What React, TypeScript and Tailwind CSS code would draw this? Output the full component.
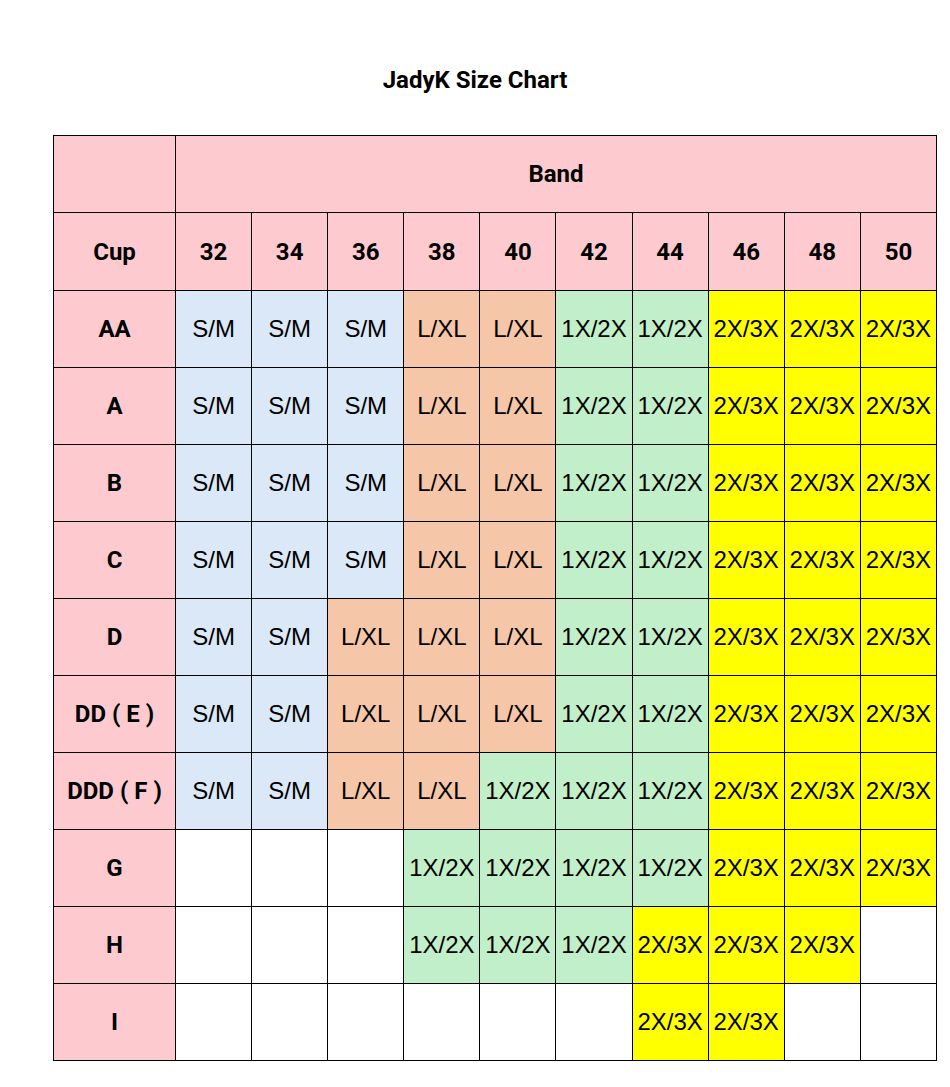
const BANDS = ["32", "34", "36", "38", "40", "42", "44", "46", "48", "50"];

type Size = "S/M" | "L/XL" | "1X/2X" | "2X/3X" | "";

const ROWS: { cup: string; sizes: Size[] }[] = [
  { cup: "AA", sizes: ["S/M", "S/M", "S/M", "L/XL", "L/XL", "1X/2X", "1X/2X", "2X/3X", "2X/3X", "2X/3X"] },
  { cup: "A", sizes: ["S/M", "S/M", "S/M", "L/XL", "L/XL", "1X/2X", "1X/2X", "2X/3X", "2X/3X", "2X/3X"] },
  { cup: "B", sizes: ["S/M", "S/M", "S/M", "L/XL", "L/XL", "1X/2X", "1X/2X", "2X/3X", "2X/3X", "2X/3X"] },
  { cup: "C", sizes: ["S/M", "S/M", "S/M", "L/XL", "L/XL", "1X/2X", "1X/2X", "2X/3X", "2X/3X", "2X/3X"] },
  { cup: "D", sizes: ["S/M", "S/M", "L/XL", "L/XL", "L/XL", "1X/2X", "1X/2X", "2X/3X", "2X/3X", "2X/3X"] },
  { cup: "DD ( E )", sizes: ["S/M", "S/M", "L/XL", "L/XL", "L/XL", "1X/2X", "1X/2X", "2X/3X", "2X/3X", "2X/3X"] },
  { cup: "DDD ( F )", sizes: ["S/M", "S/M", "L/XL", "L/XL", "1X/2X", "1X/2X", "1X/2X", "2X/3X", "2X/3X", "2X/3X"] },
  { cup: "G", sizes: ["", "", "", "1X/2X", "1X/2X", "1X/2X", "1X/2X", "2X/3X", "2X/3X", "2X/3X"] },
  { cup: "H", sizes: ["", "", "", "1X/2X", "1X/2X", "1X/2X", "2X/3X", "2X/3X", "2X/3X", ""] },
  { cup: "I", sizes: ["", "", "", "", "", "", "2X/3X", "2X/3X", "", ""] },
];

const sizeBg: Record<Size, string> = {
  "S/M": "bg-[#dae8f7]",
  "L/XL": "bg-[#f5c6a8]",
  "1X/2X": "bg-[#c1efc9]",
  "2X/3X": "bg-[#ffff00]",
  "": "bg-white",
};

const head =
  "border border-black bg-[#fdcbcf] font-bold text-[24px] text-black text-center align-middle font-['Roboto',sans-serif] whitespace-nowrap";

export default function App() {
  return (
    <div className="min-h-screen bg-white font-['Liberation_Sans',Arial,sans-serif]">
      <h1 className="pt-[65px] text-center text-[24px] font-bold leading-[30px] text-black font-['Roboto',sans-serif]">
        JadyK Size Chart
      </h1>
      <table className="ml-[53px] mt-[40px] border-collapse table-fixed w-[883px]">
        <colgroup>
          <col className="w-[122px]" />
          {BANDS.map((b) => (
            <col key={b} className="w-[76.1px]" />
          ))}
        </colgroup>
        <thead>
          <tr className="h-[77px]">
            <th className={head}></th>
            <th colSpan={10} className={head}>
              Band
            </th>
          </tr>
          <tr className="h-[78px]">
            <th className={head}>Cup</th>
            {BANDS.map((b) => (
              <th key={b} className={head}>
                {b}
              </th>
            ))}
          </tr>
        </thead>
        <tbody>
          {ROWS.map((row) => (
            <tr key={row.cup} className="h-[77px]">
              <td className={head}>{row.cup}</td>
              {row.sizes.map((s, i) => (
                <td
                  key={i}
                  className={`border border-black p-0 text-center align-middle text-[24px] text-black whitespace-nowrap ${sizeBg[s]}`}
                >
                  {s}
                </td>
              ))}
            </tr>
          ))}
        </tbody>
      </table>
    </div>
  );
}
